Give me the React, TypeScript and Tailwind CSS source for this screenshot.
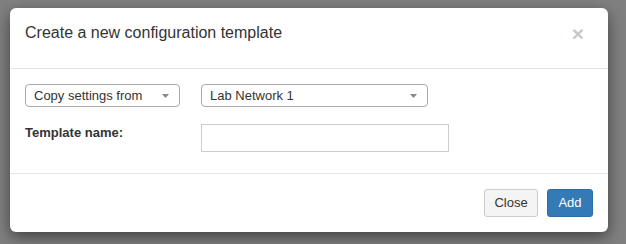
import React from "react";

function Caret() {
  return (
    <svg width="7" height="4" viewBox="0 0 7 4" className="shrink-0">
      <path d="M0 0 L7 0 L3.5 4 Z" fill="#888" />
    </svg>
  );
}

export default function App() {
  return (
    <div
      className="w-[626px] h-[244px] bg-[#808080] pt-[8px] pl-[10px] overflow-hidden"
      style={{ fontFamily: '"Liberation Sans", Arial, sans-serif' }}
    >
      <div className="w-[598px] h-[224px] bg-white rounded-[6px] shadow-[0_5px_15px_rgba(0,0,0,0.5)] flex flex-col text-[#333]">
        <div className="h-[61px] border-b border-[#e5e5e5] flex items-start justify-between px-[15px] pt-[12px]">
          <div className="text-[16px] leading-[25px]">Create a new configuration template</div>
          <div className="text-[21px] font-bold leading-[25px] text-[#c8c8c8] mr-[9px] mt-[1px]">×</div>
        </div>
        <div className="h-[105px] border-b border-[#e5e5e5] px-[15px] pt-[15px]">
          <div className="flex items-center">
            <div className="w-[155px] h-[23px] border border-[#aaa] rounded-[4px] flex items-center justify-between pl-[8px] pr-[10px] text-[13px]">
              <span>Copy settings from</span>
              <Caret />
            </div>
            <div className="ml-[21px] w-[227px] h-[23px] border border-[#aaa] rounded-[4px] flex items-center justify-between pl-[8px] pr-[10px] text-[13px]">
              <span>Lab Network 1</span>
              <Caret />
            </div>
          </div>
          <div className="flex items-start mt-[15px]">
            <div className="w-[176px] text-[13px] font-bold leading-[20px] pt-[1px]">Template name:</div>
            <div className="mt-[2px] w-[248px] h-[28px] border border-[#ccc]" />
          </div>
        </div>
        <div className="flex-1 flex items-start justify-end px-[15px] pt-[15px]">
          <div className="w-[54px] h-[28px] border border-[#ccc] bg-[#f4f4f4] rounded-[3px] flex items-center justify-center text-[13px] text-[#333]">
            Close
          </div>
          <div className="ml-[9px] w-[46px] h-[28px] border border-[#2e6da4] bg-[#337ab7] rounded-[3px] flex items-center justify-center text-[13px] text-white">
            Add
          </div>
        </div>
      </div>
    </div>
  );
}
